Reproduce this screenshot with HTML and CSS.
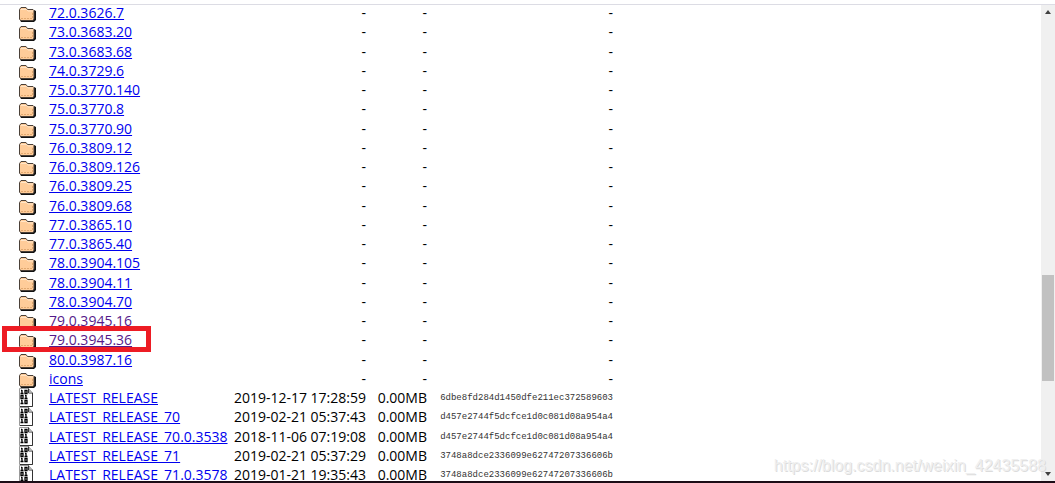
FILE: index.html
```html
<!DOCTYPE html>
<html lang="en">
<head>
    <meta charset="UTF-8">
    <meta name="viewport" content="width=device-width, initial-scale=1.0">
    <title>Index of /</title>
    <link rel="stylesheet" href="styles.css">
</head>
<body>
<svg class="symbols" aria-hidden="true">
    <symbol id="folder" viewBox="0 0 18 19">
        <path d="M3 19h13l2-2V8l-2-1v10H2z" fill="#111"/>
        <path d="M1.500 16V6.500L3 4.500h5L9.500 6.500H15l1 1V16l-1 1.500H2.500z" fill="#ffcc99" stroke="#4a4038"/>
        <path d="M3 6.500h5.500L10 8h5" fill="none" stroke="#ffe5c8"/>
        <path d="M3 15.500h11.500V9" fill="none" stroke="#e0a870" stroke-dasharray="2 1"/>
    </symbol>
    <symbol id="binary" viewBox="0 0 18 19">
        <path d="M1.500.500h9l4 4.500v13.500h-13z" fill="#fff" stroke="#999"/>
        <path d="M10.500.500V5h4M14.500 5v13.500H2" fill="none" stroke="#333"/>
        <path d="M11 1l3 4h-3z" fill="#aaa"/>
        <g fill="none" stroke="#000">
            <path d="M4 2v4M3 2.500h1M2.500 5.500h3M7 2.500h2v3H7z" stroke-width="1.300"/>
            <path d="M3 7.500h2v3H3zM8 7v4M7 7.500h1M6.500 10.500h3" stroke-width="1.300"/>
            <path d="M4 12v4M3 12.500h1M2.500 15.500h3M7 12.500h2v3H7z" stroke-width="1.300"/>
        </g>
    </symbol>
</svg>

<div class="toolbar-edge"></div>
<div class="window">
    <main class="listing">
        <table>
            <tbody>
            <tr><td class="icon"><svg><use href="#folder"/></svg></td><td class="name"><a href="#">72.0.3626.7</a></td><td class="date">-</td><td class="size">-</td><td class="etag">-</td></tr>
            <tr><td class="icon"><svg><use href="#folder"/></svg></td><td class="name"><a href="#">73.0.3683.20</a></td><td class="date">-</td><td class="size">-</td><td class="etag">-</td></tr>
            <tr><td class="icon"><svg><use href="#folder"/></svg></td><td class="name"><a href="#">73.0.3683.68</a></td><td class="date">-</td><td class="size">-</td><td class="etag">-</td></tr>
            <tr><td class="icon"><svg><use href="#folder"/></svg></td><td class="name"><a href="#">74.0.3729.6</a></td><td class="date">-</td><td class="size">-</td><td class="etag">-</td></tr>
            <tr><td class="icon"><svg><use href="#folder"/></svg></td><td class="name"><a href="#">75.0.3770.140</a></td><td class="date">-</td><td class="size">-</td><td class="etag">-</td></tr>
            <tr><td class="icon"><svg><use href="#folder"/></svg></td><td class="name"><a href="#">75.0.3770.8</a></td><td class="date">-</td><td class="size">-</td><td class="etag">-</td></tr>
            <tr><td class="icon"><svg><use href="#folder"/></svg></td><td class="name"><a href="#">75.0.3770.90</a></td><td class="date">-</td><td class="size">-</td><td class="etag">-</td></tr>
            <tr><td class="icon"><svg><use href="#folder"/></svg></td><td class="name"><a href="#">76.0.3809.12</a></td><td class="date">-</td><td class="size">-</td><td class="etag">-</td></tr>
            <tr><td class="icon"><svg><use href="#folder"/></svg></td><td class="name"><a href="#">76.0.3809.126</a></td><td class="date">-</td><td class="size">-</td><td class="etag">-</td></tr>
            <tr><td class="icon"><svg><use href="#folder"/></svg></td><td class="name"><a href="#">76.0.3809.25</a></td><td class="date">-</td><td class="size">-</td><td class="etag">-</td></tr>
            <tr><td class="icon"><svg><use href="#folder"/></svg></td><td class="name"><a href="#">76.0.3809.68</a></td><td class="date">-</td><td class="size">-</td><td class="etag">-</td></tr>
            <tr><td class="icon"><svg><use href="#folder"/></svg></td><td class="name"><a href="#">77.0.3865.10</a></td><td class="date">-</td><td class="size">-</td><td class="etag">-</td></tr>
            <tr><td class="icon"><svg><use href="#folder"/></svg></td><td class="name"><a href="#">77.0.3865.40</a></td><td class="date">-</td><td class="size">-</td><td class="etag">-</td></tr>
            <tr><td class="icon"><svg><use href="#folder"/></svg></td><td class="name"><a href="#">78.0.3904.105</a></td><td class="date">-</td><td class="size">-</td><td class="etag">-</td></tr>
            <tr><td class="icon"><svg><use href="#folder"/></svg></td><td class="name"><a href="#">78.0.3904.11</a></td><td class="date">-</td><td class="size">-</td><td class="etag">-</td></tr>
            <tr><td class="icon"><svg><use href="#folder"/></svg></td><td class="name"><a href="#">78.0.3904.70</a></td><td class="date">-</td><td class="size">-</td><td class="etag">-</td></tr>
            <tr><td class="icon"><svg><use href="#folder"/></svg></td><td class="name"><a class="visited" href="#">79.0.3945.16</a></td><td class="date">-</td><td class="size">-</td><td class="etag">-</td></tr>
            <tr class="marked"><td class="icon"><svg><use href="#folder"/></svg></td><td class="name"><a class="visited" href="#">79.0.3945.36</a></td><td class="date">-</td><td class="size">-</td><td class="etag">-</td></tr>
            <tr><td class="icon"><svg><use href="#folder"/></svg></td><td class="name"><a href="#">80.0.3987.16</a></td><td class="date">-</td><td class="size">-</td><td class="etag">-</td></tr>
            <tr><td class="icon"><svg><use href="#folder"/></svg></td><td class="name"><a href="#">icons</a></td><td class="date">-</td><td class="size">-</td><td class="etag">-</td></tr>
            <tr><td class="icon"><svg><use href="#binary"/></svg></td><td class="name"><a href="#">LATEST_RELEASE</a></td><td class="date">2019-12-17 17:28:59</td><td class="size">0.00MB</td><td class="etag hash">6dbe8fd284d1450dfe211ec372589603</td></tr>
            <tr><td class="icon"><svg><use href="#binary"/></svg></td><td class="name"><a href="#">LATEST_RELEASE_70</a></td><td class="date">2019-02-21 05:37:43</td><td class="size">0.00MB</td><td class="etag hash">d457e2744f5dcfce1d0c081d08a954a4</td></tr>
            <tr><td class="icon"><svg><use href="#binary"/></svg></td><td class="name"><a href="#">LATEST_RELEASE_70.0.3538</a></td><td class="date">2018-11-06 07:19:08</td><td class="size">0.00MB</td><td class="etag hash">d457e2744f5dcfce1d0c081d08a954a4</td></tr>
            <tr><td class="icon"><svg><use href="#binary"/></svg></td><td class="name"><a href="#">LATEST_RELEASE_71</a></td><td class="date">2019-02-21 05:37:29</td><td class="size">0.00MB</td><td class="etag hash">3748a8dce2336099e62747207336606b</td></tr>
            <tr><td class="icon"><svg><use href="#binary"/></svg></td><td class="name"><a href="#">LATEST_RELEASE_71.0.3578</a></td><td class="date">2019-01-21 19:35:43</td><td class="size">0.00MB</td><td class="etag hash">3748a8dce2336099e62747207336606b</td></tr>
            </tbody>
        </table>
    </main>
    <div class="scrollbar" aria-hidden="true">
        <span class="arrow up"></span>
        <div class="track">
            <div class="before"></div>
            <div class="thumb"></div>
            <div class="after"></div>
        </div>
        <span class="arrow down"></span>
    </div>
    <div class="watermark">https://blog.csdn.net/weixin_42435588</div>
</div>
<div class="taskbar-edge"></div>
</body>
</html>
```
FILE: styles.css
```css
body {
    display: flex;
    flex-direction: column;
    height: 100vh;
    margin: 0;
    overflow: hidden;
    background-color: #fff;
    color: #000;
    font-family: "Segoe UI", "Open Sans", "Noto Sans", sans-serif;
    font-size: 14px;
    line-height: 19px;
}
.symbols {
    position: absolute;
    width: 0;
    height: 0;
}
.toolbar-edge {
    flex: none;
    height: 4px;
    border-bottom: 1px solid #dcdce4;
}
.taskbar-edge {
    flex: none;
    height: 2px;
    background-color: #1c0c16;
}
.window {
    position: relative;
    display: flex;
    flex: 1;
    min-height: 0;
}
.listing {
    flex: 1;
    overflow: hidden;
}

/* file table */
table {
    width: 613px;
    margin-top: -2px;
    border-collapse: collapse;
    table-layout: fixed;
}
tr {
    height: 19px;
}
tr:nth-child(4n+2) {
    height: 20px;
}
td {
    padding: 0;
    vertical-align: top;
    text-align: right;
    white-space: nowrap;
}
.icon {
    width: 31px;
    padding-left: 18px;
}
.icon svg {
    display: block;
    width: 18px;
    height: 19px;
}
.name {
    width: 177px;
    text-align: left;
}
.date {
    width: 140px;
}
.size {
    width: 61px;
}
.hash {
    padding-top: 2px;
    color: #333;
    font-family: "NSimSun", "Liberation Mono", monospace;
    font-size: 9px;
    line-height: 17px;
}
a {
    color: #0000ee;
}
a.visited {
    color: #551a8b;
}

/* red frame around the chosen version */
.marked .icon {
    position: relative;
}
.marked .icon::after {
    content: "";
    position: absolute;
    top: -4px;
    left: 2px;
    width: 139px;
    height: 16px;
    border: 5px solid #ed1c24;
}

/* scrollbar */
.scrollbar {
    display: flex;
    flex-direction: column;
    flex: none;
    width: 14px;
    background-color: #f0f0f0;
}
.arrow {
    align-self: center;
    border: 3px solid transparent;
}
.up {
    margin: 2px 0 5px;
    border-bottom: 4px solid #404040;
}
.down {
    margin: 5px 0 2px;
    border-top: 4px solid #404040;
}
.track {
    display: flex;
    flex-direction: column;
    flex: 1;
}
.before {
    flex: 256;
}
.thumb {
    flex: 106;
    margin: 0 1px;
    background-color: #c1c1c1;
}
.after {
    flex: 86;
}

.watermark {
    position: absolute;
    right: 9px;
    bottom: 6px;
    color: #efefef;
    font-family: "Liberation Sans", Arial, sans-serif;
    font-size: 16px;
    text-shadow: 1px 1px 0 #dcdcdc;
}
```
